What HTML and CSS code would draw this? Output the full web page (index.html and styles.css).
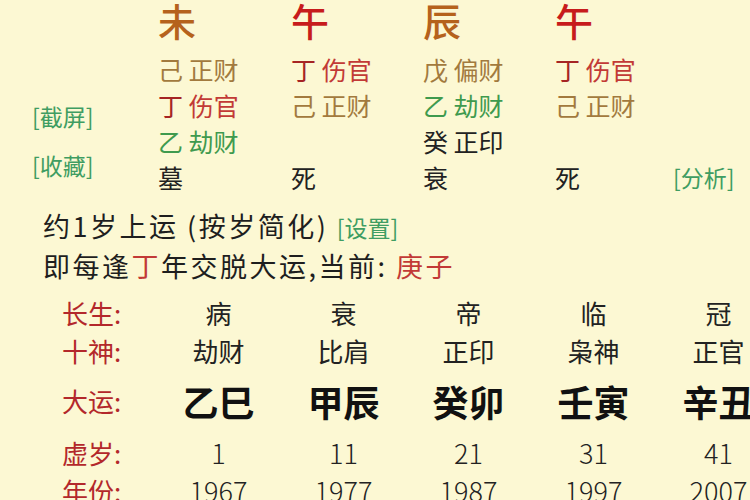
FILE: index.html
```html
<!DOCTYPE html>
<html lang="zh-CN">
<head>
<meta charset="utf-8">
<title>八字排盘</title>
<link rel="stylesheet" href="styles.css">
</head>
<body>
<div class="page">
  <section class="top">
    <div class="side">
      <span class="link">[截屏]</span>
      <span class="link">[收藏]</span>
    </div>
    <div class="pillars">
      <span class="branch c-earth">未</span>
      <span class="branch c-fire">午</span>
      <span class="branch c-earth">辰</span>
      <span class="branch c-fire">午</span>
      <span></span>

      <span class="hid c-gold">己 正财</span>
      <span class="hid"><b class="c-dred">丁</b> <i class="c-red">伤官</i></span>
      <span class="hid c-gold">戊 偏财</span>
      <span class="hid"><b class="c-dred">丁</b> <i class="c-red">伤官</i></span>
      <span></span>

      <span class="hid"><b class="c-dred">丁</b> <i class="c-red">伤官</i></span>
      <span class="hid c-gold">己 正财</span>
      <span class="hid c-green">乙 劫财</span>
      <span class="hid c-gold">己 正财</span>
      <span></span>

      <span class="hid c-green">乙 劫财</span>
      <span></span>
      <span class="hid c-dark">癸 正印</span>
      <span></span>
      <span></span>

      <span class="hid c-dark">墓</span>
      <span class="hid c-dark">死</span>
      <span class="hid c-dark">衰</span>
      <span class="hid c-dark">死</span>
      <span class="link link-end">[分析]</span>
    </div>
  </section>

  <section class="info">
    <p class="line">约1岁上运 (按岁简化) <span class="link small">[设置]</span></p>
    <p class="line">即每逢<span class="c-red">丁</span>年交脱大运,当前: <span class="c-red">庚子</span></p>
  </section>

  <section class="luck">
    <div class="lrow r-norm">
      <span class="label">长生:</span>
      <span>病</span><span>衰</span><span>帝</span><span>临</span><span>冠</span>
    </div>
    <div class="lrow r-norm">
      <span class="label">十神:</span>
      <span>劫财</span><span>比肩</span><span>正印</span><span>枭神</span><span>正官</span>
    </div>
    <div class="lrow r-big">
      <span class="label">大运:</span>
      <span class="gz">乙巳</span><span class="gz">甲辰</span><span class="gz">癸卯</span><span class="gz">壬寅</span><span class="gz">辛丑</span>
    </div>
    <div class="lrow r-age">
      <span class="label">虚岁:</span>
      <span class="num">1</span><span class="num">11</span><span class="num">21</span><span class="num">31</span><span class="num">41</span>
    </div>
    <div class="lrow r-year">
      <span class="label">年份:</span>
      <span class="num">1967</span><span class="num">1977</span><span class="num">1987</span><span class="num">1997</span><span class="num">2007</span>
    </div>
  </section>
</div>
</body>
</html>
```

FILE: styles.css
```css
html, body {
  margin: 0;
  padding: 0;
  overflow: hidden;
  background: #fcf8d3;
}

body {
  width: 750px;
  height: 500px;
  font-family: "Noto Sans CJK SC", "Noto Sans", sans-serif;
  color: #1e1e1e;
}

.page {
  width: 750px;
  height: 500px;
  overflow: hidden;
}

b, i {
  font-weight: inherit;
  font-style: normal;
}

/* ---- top: four pillars ---- */
.top {
  display: flex;
  height: 195px;
}

.side {
  width: 126px;
  padding-left: 32px;
  padding-top: 98px;
  display: flex;
  flex-direction: column;
  gap: 13px;
}

.link {
  color: #3f9d62;
  font-size: 23px;
  line-height: 36px;
  white-space: nowrap;
}

.pillars {
  display: grid;
  grid-template-columns: 133px 132px 132px 118px 64px;
  grid-template-rows: 51px repeat(4, 36px);
}

.branch {
  font-size: 38px;
  line-height: 40px;
  font-weight: 500;
}

.hid {
  font-size: 25px;
  line-height: 36px;
  white-space: nowrap;
}

.link-end {
  font-size: 23px;
}

.c-earth { color: #b5621c; }
.c-fire  { color: #c71c1c; }
.c-gold  { color: #a27a3e; }
.c-dred  { color: #a52424; }
.c-red   { color: #c23a36; }
.c-green { color: #3f9a4e; }
.c-dark  { color: #222; }

/* ---- info lines ---- */
.info {
  padding-top: 11px;
  padding-left: 43px;
}

.line {
  margin: 0;
  font-size: 27px;
  line-height: 40px;
  letter-spacing: 2.5px;
  white-space: nowrap;
  color: #1e1e1e;
}

.line .small {
  font-size: 23px;
  letter-spacing: 0;
}

/* ---- luck table ---- */
.luck {
  margin-top: 8px;
}

.lrow {
  display: grid;
  grid-template-columns: 156px repeat(5, 125px);
  align-items: center;
  font-size: 26px;
  color: #222;
}

.lrow > span {
  text-align: center;
  white-space: nowrap;
}

.lrow > .label {
  text-align: left;
  padding-left: 62px;
  color: #b3282b;
}

.r-norm { height: 38px; line-height: 38px; }
.r-big  { height: 62px; line-height: 62px; }
.r-age  { height: 42px; line-height: 42px; }
.r-year { height: 34px; line-height: 34px; }

.gz {
  font-size: 36px;
  font-weight: 700;
  color: #111;
}

.num {
  font-size: 27px;
  font-weight: 300;
}
```
